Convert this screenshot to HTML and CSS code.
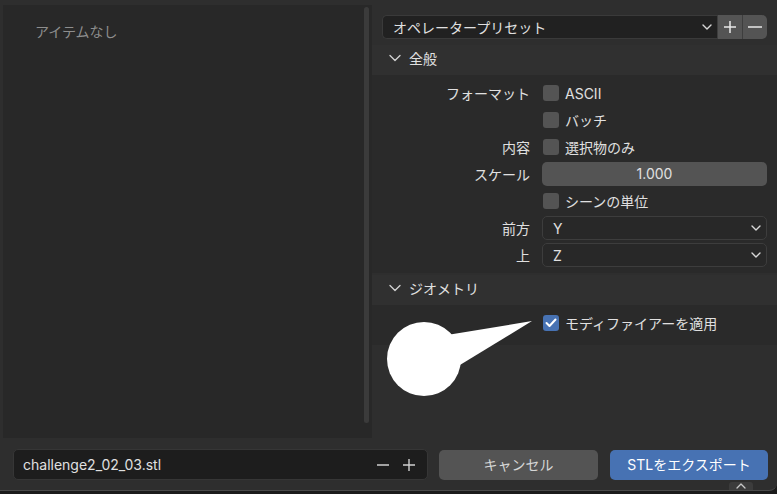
FILE: index.html
```html
<!DOCTYPE html>
<html>

<head>
    <title>STLをエクスポート</title>
    <meta charset="utf-8" />
    <link rel="stylesheet" href="styles.css">
</head>

<body>
    <div class="window">
        <div class="main">
            <div class="file-list">
                <div class="list-body"><span class="empty">アイテムなし</span></div>
                <div class="scrollbar"></div>
            </div>
            <div class="props">
                <div class="preset-row">
                    <div class="preset-select">
                        <span>オペレータープリセット</span>
                        <svg class="chev" width="10" height="6" viewBox="0 0 10 6"><path d="M1 1 L5 5 L9 1" /></svg>
                    </div>
                    <div class="preset-btn">
                        <svg width="12" height="12" viewBox="0 0 12 12"><path d="M6 0 V12 M0 6 H12" /></svg>
                    </div>
                    <div class="preset-btn last">
                        <svg width="14" height="12" viewBox="0 0 14 12"><path d="M0 6 H14" /></svg>
                    </div>
                </div>

                <div class="panel">
                    <div class="panel-head">
                        <svg class="head-chev" width="12" height="8" viewBox="0 0 12 8"><path d="M1 1.5 L6 6.5 L11 1.5" /></svg>
                        全般
                    </div>
                    <div class="panel-body">
                        <div class="row">
                            <span class="label">フォーマット</span>
                            <span class="check"></span><span class="opt">ASCII</span>
                        </div>
                        <div class="row">
                            <span class="label"></span>
                            <span class="check"></span><span class="opt">バッチ</span>
                        </div>
                        <div class="row">
                            <span class="label">内容</span>
                            <span class="check"></span><span class="opt">選択物のみ</span>
                        </div>
                        <div class="row">
                            <span class="label">スケール</span>
                            <div class="num-field">1.000</div>
                        </div>
                        <div class="row">
                            <span class="label"></span>
                            <span class="check"></span><span class="opt">シーンの単位</span>
                        </div>
                        <div class="row">
                            <span class="label">前方</span>
                            <div class="select">
                                <span>Y</span>
                                <svg class="chev" width="10" height="6" viewBox="0 0 10 6"><path d="M1 1 L5 5 L9 1" /></svg>
                            </div>
                        </div>
                        <div class="row">
                            <span class="label">上</span>
                            <div class="select">
                                <span>Z</span>
                                <svg class="chev" width="10" height="6" viewBox="0 0 10 6"><path d="M1 1 L5 5 L9 1" /></svg>
                            </div>
                        </div>
                    </div>
                </div>

                <div class="panel">
                    <div class="panel-head">
                        <svg class="head-chev" width="12" height="8" viewBox="0 0 12 8"><path d="M1 1.5 L6 6.5 L11 1.5" /></svg>
                        ジオメトリ
                    </div>
                    <div class="panel-body geo">
                        <div class="row">
                            <span class="label"></span>
                            <span class="check on">
                                <svg width="12" height="10" viewBox="0 0 12 10"><path d="M1.5 5 L4.5 8 L10.5 1.5" /></svg>
                            </span>
                            <span class="opt">モディファイアーを適用</span>
                        </div>
                    </div>
                </div>
            </div>
        </div>

        <div class="bottom">
            <div class="name-field">
                <span class="fname">challenge2_02_03.stl</span>
                <span class="pm">
                    <svg width="12" height="12" viewBox="0 0 12 12"><path d="M0 6 H12" /></svg>
                    <svg width="12" height="12" viewBox="0 0 12 12"><path d="M6 0 V12 M0 6 H12" /></svg>
                </span>
            </div>
            <div class="btn cancel">キャンセル</div>
            <div class="btn export">STLをエクスポート</div>
        </div>
        <div class="up-tab">
            <svg width="10" height="6" viewBox="0 0 10 6"><path d="M1 5 L5 1 L9 5" /></svg>
        </div>
    </div>

    <!-- callout drawn over the dialog -->
    <svg class="callout" width="777" height="494" viewBox="0 0 777 494">
        <circle cx="424" cy="359" r="37" fill="#fff" />
        <polygon points="532,321 441,336 455,368" fill="#fff" />
    </svg>
</body>

</html>
```

FILE: styles.css
```css
html,
body {
    margin: 0;
    padding: 0;
    background: #1b1b1b;
}

body {
    width: 777px;
    height: 494px;
    overflow: hidden;
    position: relative;
    font-family: Inter, "Noto Sans CJK JP", sans-serif;
    font-size: 14px;
    color: #e0e0e0;
}

.window {
    position: relative;
    height: 490px;
    background: #2e2e2e;
    border-bottom: 1px solid #4a4a4a;
    border-bottom-right-radius: 8px;
    display: flex;
    flex-direction: column;
}

.main {
    display: flex;
    flex-flow: row nowrap;
    margin-top: 5px;
    height: 433px;
}

.file-list {
    display: flex;
    margin-left: 3px;
    width: 369px;
    background: #282828;
}

.list-body {
    flex: 1;
    padding: 16px 0 0 32px;
}

.empty {
    color: #8e8e8e;
}

.scrollbar {
    width: 5px;
    margin: 2px 3px 15px 0;
    border-radius: 3px;
    background: #3b3b3b;
}

.props {
    flex: 1;
}

svg path {
    fill: none;
    stroke-linecap: round;
    stroke-linejoin: round;
}

.preset-row {
    display: flex;
    height: 24px;
    margin: 10px 10px 0 10px;
}

.preset-select {
    flex: 1;
    display: flex;
    align-items: center;
    justify-content: space-between;
    padding: 0 5px 0 10px;
    background: #212121;
    border: 1px solid #3a3a3a;
    border-right: 0;
    border-radius: 5px 0 0 5px;
}

.chev path {
    stroke: #d8d8d8;
    stroke-width: 1.4;
}

.preset-btn {
    width: 24px;
    display: flex;
    align-items: center;
    justify-content: center;
    background: #545454;
    border-left: 1px solid #3e3e3e;
}

.preset-btn.last {
    border-radius: 0 5px 5px 0;
}

.preset-btn path {
    stroke: #e8e8e8;
    stroke-width: 1.5;
}

.panel-head {
    display: flex;
    align-items: center;
    height: 26px;
    padding: 0 0 4px 17px;
    margin-top: 6px;
    background: #303030;
}

.panel + .panel .panel-head {
    margin-top: 2px;
    height: 25px;
    padding-bottom: 5px;
}

.head-chev {
    margin-right: 8px;
}

.head-chev path {
    stroke: #cfcfcf;
    stroke-width: 1.4;
}

.panel-body {
    display: flex;
    flex-direction: column;
    gap: 3px;
    padding: 6px 10px 6px 10px;
    background: #2a2a2a;
}

.panel-body.geo {
    padding-bottom: 10px;
}

.row {
    display: flex;
    align-items: center;
    height: 24px;
}

.label {
    width: 148px;
    margin-right: 12px;
    text-align: right;
}

.check {
    width: 16px;
    height: 16px;
    margin-left: 1px;
    margin-right: 6px;
    border-radius: 3px;
    background: #545454;
    display: flex;
    align-items: center;
    justify-content: center;
}

.check.on {
    background: #4772b3;
}

.check.on path {
    stroke: #fff;
    stroke-width: 2;
}

.num-field {
    flex: 1;
    height: 24px;
    line-height: 24px;
    text-align: center;
    background: #545454;
    border-radius: 5px;
}

.select {
    flex: 1;
    height: 22px;
    display: flex;
    align-items: center;
    justify-content: space-between;
    padding: 0 5px 0 10px;
    background: #282828;
    border: 1px solid #3d3d3d;
    border-radius: 5px;
}

.bottom {
    display: flex;
    align-items: center;
    height: 31px;
    padding: 11px 9px 0 13px;
}

.name-field {
    width: 413px;
    height: 29px;
    display: flex;
    align-items: center;
    justify-content: space-between;
    background: #1d1d1d;
    border: 1px solid #363636;
    border-radius: 5px;
}

.fname {
    margin-left: 9px;
}

.pm {
    display: flex;
    gap: 14px;
    margin-right: 12px;
}

.pm path {
    stroke: #cfcfcf;
    stroke-width: 1.4;
}

.btn {
    height: 30px;
    line-height: 30px;
    text-align: center;
    border-radius: 5px;
}

.cancel {
    width: 159px;
    margin-left: 11px;
    background: #545454;
    color: #d6d6d6;
}

.export {
    width: 158px;
    margin-left: 12px;
    background: #4772b3;
    color: #fff;
}

.up-tab {
    position: absolute;
    left: 729px;
    top: 482px;
    width: 24px;
    height: 8px;
    background: #3c3c3c;
    border-radius: 3px 3px 0 0;
    display: flex;
    justify-content: center;
    align-items: center;
}

.up-tab path {
    stroke: #c8c8c8;
    stroke-width: 1.3;
}

.callout {
    position: absolute;
    left: 0;
    top: 0;
    pointer-events: none;
}
```
